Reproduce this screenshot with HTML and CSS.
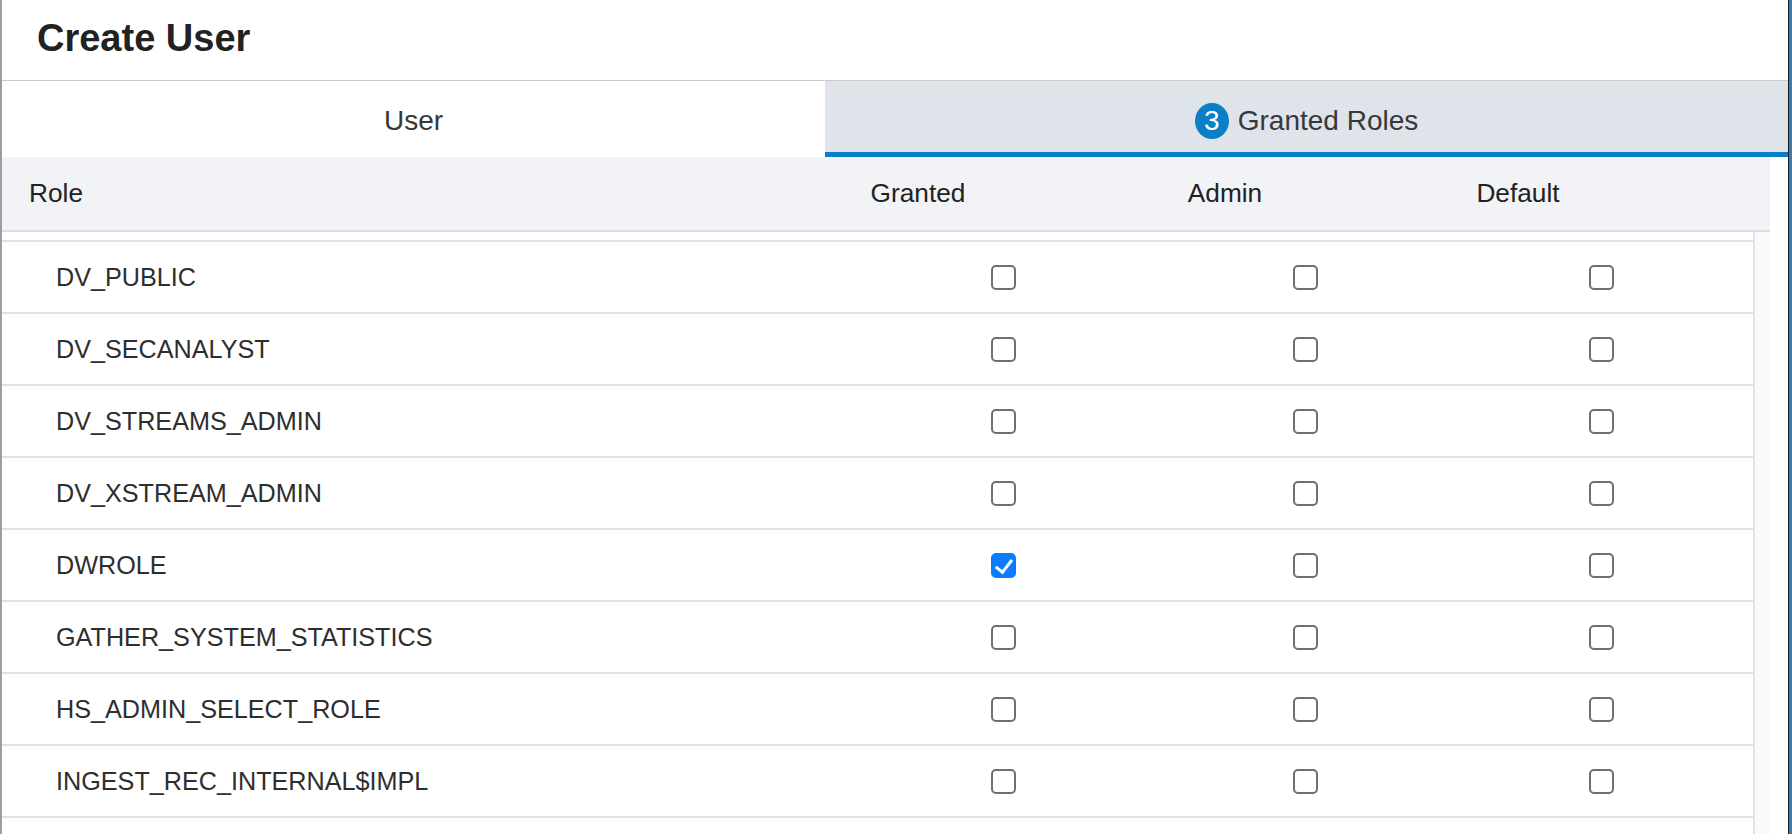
FILE: index.html
```html
<!DOCTYPE html>
<html lang="en">
<head>
<meta charset="utf-8">
<title>Create User</title>
<link rel="stylesheet" href="styles.css">
</head>
<body>
<div class="window">
  <header class="title-bar">
    <h1 class="title">Create User</h1>
  </header>
  <nav class="tabs">
    <div class="tab tab-user">User</div>
    <div class="tab tab-roles active"><span class="badge">3</span><span>Granted Roles</span></div>
  </nav>
  <section class="panel">
    <div class="table">
      <div class="thead">
        <div class="th th-role">Role</div>
        <div class="th">Granted</div>
        <div class="th">Admin</div>
        <div class="th">Default</div>
        <div class="th"></div>
      </div>
      <div class="tbody-wrap">
        <div class="rows">
          <div class="row"><div class="cell-role">DV_PUBLIC</div><div class="cell"><input type="checkbox" class="cb"></div><div class="cell"><input type="checkbox" class="cb"></div><div class="cell"><input type="checkbox" class="cb"></div></div>
          <div class="row"><div class="cell-role">DV_SECANALYST</div><div class="cell"><input type="checkbox" class="cb"></div><div class="cell"><input type="checkbox" class="cb"></div><div class="cell"><input type="checkbox" class="cb"></div></div>
          <div class="row"><div class="cell-role">DV_STREAMS_ADMIN</div><div class="cell"><input type="checkbox" class="cb"></div><div class="cell"><input type="checkbox" class="cb"></div><div class="cell"><input type="checkbox" class="cb"></div></div>
          <div class="row"><div class="cell-role">DV_XSTREAM_ADMIN</div><div class="cell"><input type="checkbox" class="cb"></div><div class="cell"><input type="checkbox" class="cb"></div><div class="cell"><input type="checkbox" class="cb"></div></div>
          <div class="row"><div class="cell-role">DWROLE</div><div class="cell"><input type="checkbox" class="cb" checked></div><div class="cell"><input type="checkbox" class="cb"></div><div class="cell"><input type="checkbox" class="cb"></div></div>
          <div class="row"><div class="cell-role">GATHER_SYSTEM_STATISTICS</div><div class="cell"><input type="checkbox" class="cb"></div><div class="cell"><input type="checkbox" class="cb"></div><div class="cell"><input type="checkbox" class="cb"></div></div>
          <div class="row"><div class="cell-role">HS_ADMIN_SELECT_ROLE</div><div class="cell"><input type="checkbox" class="cb"></div><div class="cell"><input type="checkbox" class="cb"></div><div class="cell"><input type="checkbox" class="cb"></div></div>
          <div class="row"><div class="cell-role">INGEST_REC_INTERNAL$IMPL</div><div class="cell"><input type="checkbox" class="cb"></div><div class="cell"><input type="checkbox" class="cb"></div><div class="cell"><input type="checkbox" class="cb"></div></div>
        </div>
        <div class="scrollbar"></div>
      </div>
    </div>
  </section>
</div>
</body>
</html>
```

FILE: styles.css
```css
* { box-sizing: border-box; }

html, body {
  margin: 0;
  padding: 0;
  height: 834px;
  overflow: hidden;
}

body {
  background: #3c7ab4;
  font-family: "Liberation Sans", Arial, sans-serif;
}

.window {
  width: 1789px;
  height: 834px;
  background: #ffffff;
  border-left: 2px solid #9d9d9d;
  border-right: 1px solid #1c1c1c;
  display: flex;
  flex-direction: column;
  overflow: hidden;
}

.title-bar {
  height: 81px;
  flex: 0 0 81px;
  border-bottom: 1px solid #cbcbcb;
  padding: 17px 0 0 35px;
}

.title {
  margin: 0;
  font-size: 38px;
  font-weight: 700;
  line-height: normal;
  color: #222222;
}

.tabs {
  display: flex;
  height: 76px;
  flex: 0 0 76px;
}

.tab {
  height: 76px;
  padding-top: 8px;
  border-bottom: 5px solid #ffffff;
  display: flex;
  align-items: center;
  justify-content: center;
  font-size: 28px;
  color: #383838;
}

.tab-user {
  flex: 0 0 823px;
  background: #ffffff;
}

.tab-roles {
  flex: 1 1 auto;
  background: #dfe3ea;
  gap: 9px;
}

.tab.active {
  border-bottom-color: #0b7fc6;
}

.badge {
  width: 34px;
  height: 36px;
  border-radius: 50%;
  background: #0b7fc6;
  color: #ffffff;
  display: flex;
  align-items: center;
  justify-content: center;
  font-size: 28px;
  line-height: 1;
}

.panel {
  flex: 1 1 auto;
  padding-right: 18px;
  display: flex;
  flex-direction: column;
  min-height: 0;
}

.table {
  flex: 1 1 auto;
  display: flex;
  flex-direction: column;
  min-height: 0;
}

.thead {
  height: 75px;
  flex: 0 0 75px;
  background: #f1f3f6;
  border-bottom: 2px solid #d8dee6;
  display: grid;
  grid-template-columns: 762px 308px 306px 280px 1fr;
  align-items: center;
  font-size: 26.25px;
  color: #222222;
}

.th {
  text-align: center;
}

.th-role {
  text-align: left;
  padding-left: 27px;
}

.tbody-wrap {
  flex: 1 1 auto;
  display: flex;
  min-height: 0;
}

.rows {
  flex: 1 1 auto;
  padding-top: 8px;
}

.row {
  height: 72px;
  border-top: 2px solid #e2e2e2;
  display: grid;
  grid-template-columns: 850px 302px 302px 290px 1fr;
  align-items: center;
  font-size: 25.2px;
  color: #2e2e2e;
}

.row:last-child {
  height: 74px;
  border-bottom: 2px solid #e2e2e2;
}

.cell-role {
  padding-left: 54px;
}

.cell {
  display: flex;
  justify-content: center;
  align-items: center;
}

.scrollbar {
  flex: 0 0 17px;
  background: #fafafa;
  border-left: 2px solid #e4e4e4;
}

.cb {
  appearance: none;
  -webkit-appearance: none;
  margin: 0;
  width: 25px;
  height: 25px;
  border: 2px solid #6f6f6f;
  border-radius: 5px;
  background: #ffffff;
  position: relative;
}

.cb:checked {
  background: #0a7dff;
  border-color: #0a7dff;
}

.cb:checked::after {
  content: "";
  position: absolute;
  left: 6px;
  top: 1px;
  width: 7px;
  height: 14px;
  border-right: 3px solid #ffffff;
  border-bottom: 3px solid #ffffff;
  transform: rotate(38deg);
}
```
